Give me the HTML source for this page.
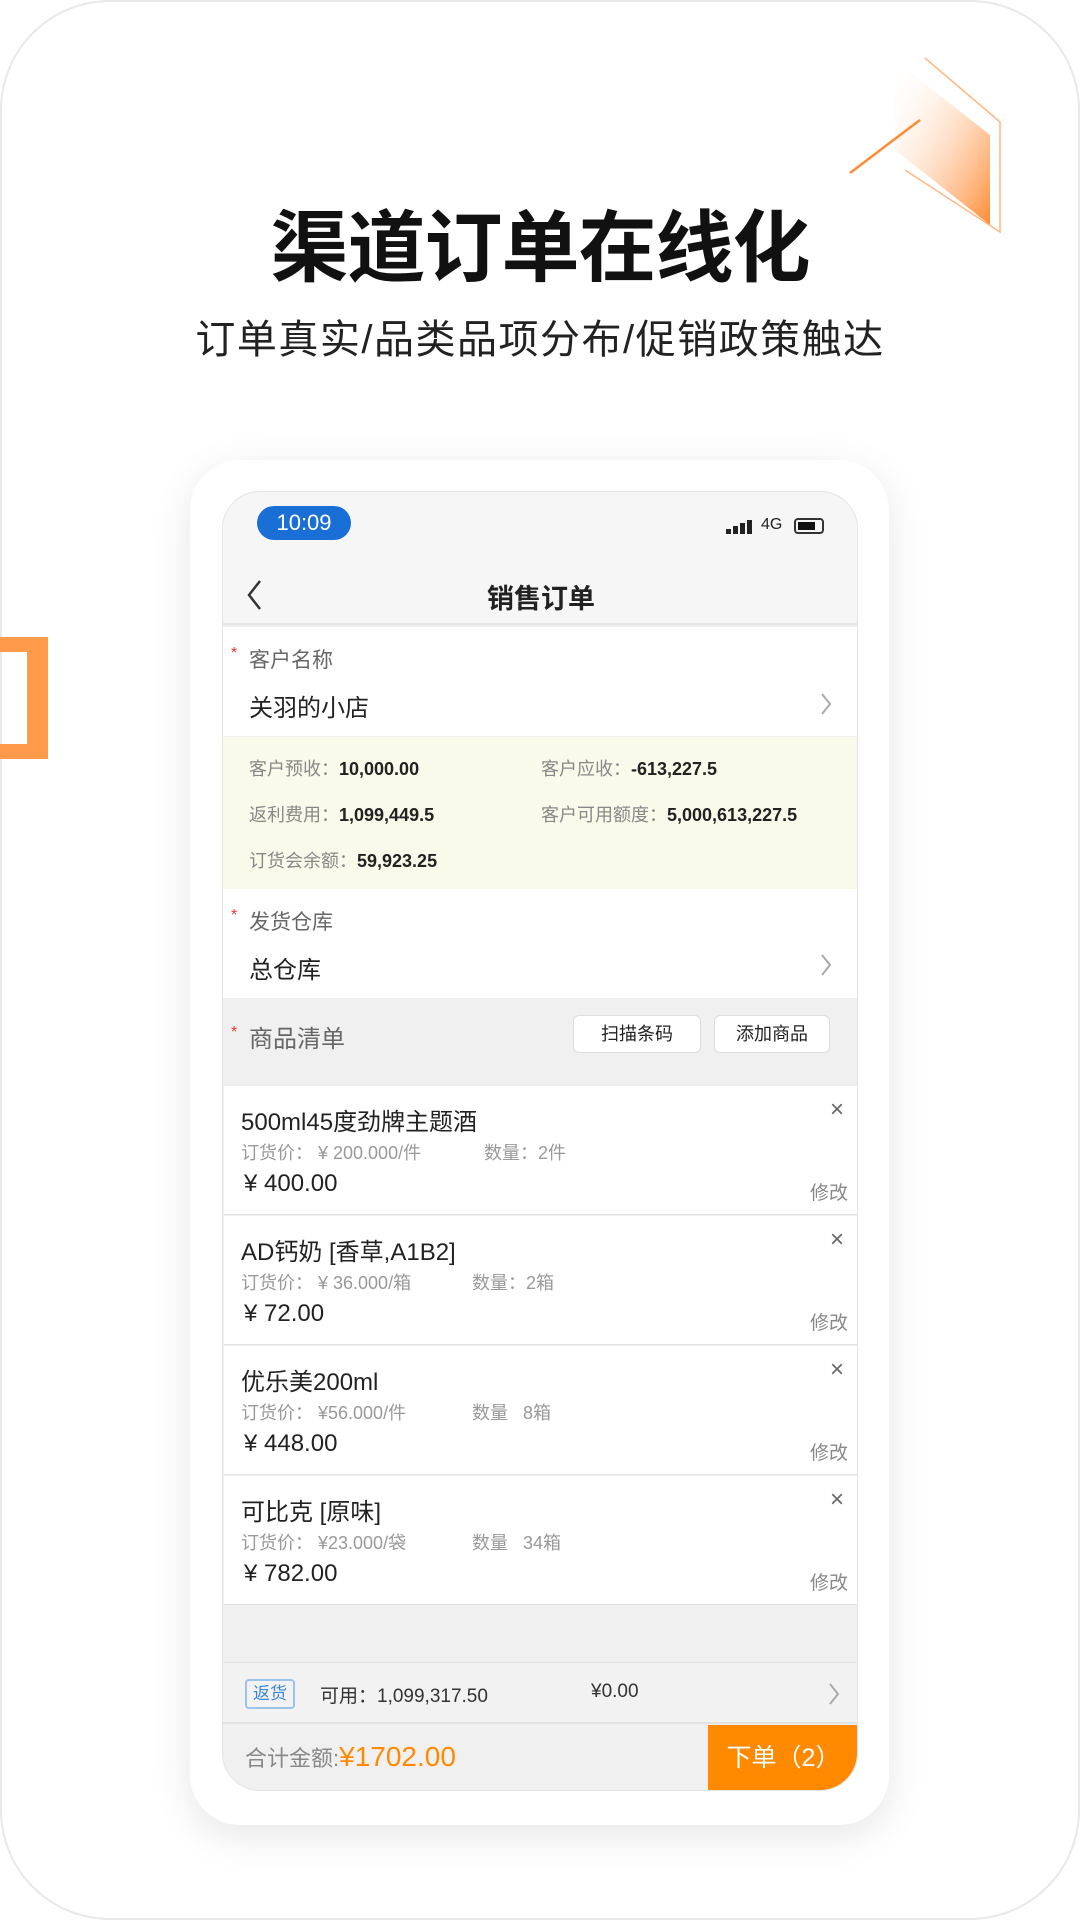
<!DOCTYPE html>
<html><head><meta charset="utf-8"><style>
*{margin:0;padding:0;box-sizing:border-box}
body{width:1080px;height:1920px;background:#fff;position:relative;overflow:hidden;font-family:"Liberation Sans","Noto Sans CJK SC",sans-serif;color:#222}
.a{position:absolute;white-space:nowrap}
.frame{position:absolute;left:0;top:0;width:1080px;height:1920px;border:2px solid #e8e8e8;border-radius:110px}
.card{position:absolute;left:190px;top:460px;width:699px;height:1365px;background:#fff;border-radius:50px;box-shadow:0 10px 40px rgba(0,0,0,0.10)}
.screen{position:absolute;left:222px;top:491px;width:636px;height:1300px;background:#f0f0f0;border-radius:38px;overflow:hidden;border:1px solid #e4e4e4}
.s{position:absolute;left:0;width:636px}
.lbl{color:#666;font-size:21px}
.star{color:#e33;font-size:16px}
.item{position:absolute;left:1px;width:634px;height:129px;background:#fff;border-bottom:1px solid #e2e2e2}
.item .n{position:absolute;left:17px;top:16px;font-size:24px;color:#222}
.item .p{position:absolute;left:17px;top:53px;font-size:18px;color:#999}
.item .q{position:absolute;left:264px;top:53px;font-size:18px;color:#999}
.item .t{position:absolute;left:20px;top:84px;font-size:24px;color:#222}
.item .x{position:absolute;right:14px;top:10px;font-size:24px;color:#666}
.item .m{position:absolute;right:10px;top:92px;font-size:19px;color:#888}
.y{font-size:18px;color:#888}.y b{color:#222;font-weight:bold}
.btn{position:absolute;top:17px;height:38px;background:#fff;border:1px solid #ddd;border-radius:6px;font-size:18px;text-align:center;line-height:36px;color:#222}
</style></head><body>
<div class="frame"></div>
<svg class="a" style="left:845px;top:50px" width="170" height="190" viewBox="0 0 170 190">
<defs><linearGradient id="g" x1="0" y1="0" x2="1" y2="1"><stop offset="0" stop-color="#fff" stop-opacity="0"/><stop offset="1" stop-color="#ff8a33"/></linearGradient></defs>
<polygon points="50,10 145,85 145,175 50,100" fill="url(#g)"/>
<polyline points="80,8 155,72 155,182 60,120" fill="none" stroke="#ff9a50" stroke-width="1.5" opacity="0.7"/>
<line x1="5" y1="123" x2="75" y2="70" stroke="#ff8a33" stroke-width="2.5"/>
</svg>
<div class="a" style="left:0;top:637px;width:48px;height:122px;border:15px solid #ff9a4a;border-left:none;border-right-width:21px"></div>
<div class="a" style="left:0;top:186px;width:1080px;text-align:center;font-size:78px;font-weight:bold;color:#111;letter-spacing:-1px">渠道订单在线化</div>
<div class="a" style="left:0;top:307px;width:1080px;text-align:center;font-size:40px;color:#222;letter-spacing:1.5px">订单真实/品类品项分布/促销政策触达</div>
<div class="card"></div>
<div class="screen">
 <div class="s" style="top:0;height:133px;background:#f6f6f6;border-bottom:2px solid #e6e6e6"></div>
 <div class="a" style="left:34px;top:14px;width:94px;height:34px;background:#1a6fd6;border-radius:17px;color:#fff;font-size:22px;text-align:center;line-height:34px;font-weight:500">10:09</div>
 <div class="a" style="left:503px;top:28px;width:28px;height:14px">
  <div class="a" style="left:0;top:9px;width:5px;height:5px;background:#222"></div><div class="a" style="left:7px;top:6px;width:5px;height:8px;background:#222"></div><div class="a" style="left:14px;top:3px;width:5px;height:11px;background:#222"></div><div class="a" style="left:21px;top:0;width:5px;height:14px;background:#222"></div></div>
 <div class="a" style="left:538px;top:24px;font-size:16px;color:#222">4G</div>
 <div class="a" style="left:571px;top:26px;width:30px;height:16px;border:2px solid #333;border-radius:4px"><div style="margin:2px;width:17px;height:8px;background:#111"></div></div>
 <svg class="a" style="left:22px;top:86px" width="20" height="34"><polyline points="15,3 4,17 15,31" fill="none" stroke="#333" stroke-width="2.5"/></svg>
 <div class="a" style="left:0;width:636px;text-align:center;top:85px;font-size:27px;font-weight:bold;color:#222">销售订单</div>
 <div class="s" style="top:135px;height:109px;background:#fff"></div>
 <div class="a" style="left:8px;top:153px"><span class="star">*</span></div>
 <div class="a lbl" style="left:26px;top:152px">客户名称</div>
 <div class="a" style="left:26px;top:196px;font-size:24px">关羽的小店</div>
 <svg class="a" style="left:596px;top:199px" width="14" height="26"><polyline points="3,3 11,13 3,23" fill="none" stroke="#aaa" stroke-width="2"/></svg>
 <div class="s" style="top:244px;height:153px;background:#fafaeb;border-top:1px solid #eee"></div>
 <div class="a y" style="left:26px;top:263px">客户预收：<b>10,000.00</b></div>
 <div class="a y" style="left:318px;top:263px">客户应收：<b>-613,227.5</b></div>
 <div class="a y" style="left:26px;top:309px">返利费用：<b>1,099,449.5</b></div>
 <div class="a y" style="left:318px;top:309px">客户可用额度：<b>5,000,613,227.5</b></div>
 <div class="a y" style="left:26px;top:355px">订货会余额：<b>59,923.25</b></div>
 <div class="s" style="top:397px;height:109px;background:#fff"></div>
 <div class="a" style="left:8px;top:415px"><span class="star">*</span></div>
 <div class="a lbl" style="left:26px;top:414px">发货仓库</div>
 <div class="a" style="left:26px;top:458px;font-size:24px">总仓库</div>
 <svg class="a" style="left:596px;top:460px" width="14" height="26"><polyline points="3,3 11,13 3,23" fill="none" stroke="#aaa" stroke-width="2"/></svg>
 <div class="a" style="left:8px;top:532px"><span class="star">*</span></div>
 <div class="a" style="left:26px;top:527px;font-size:24px;color:#666">商品清单</div>
 <div class="btn" style="left:350px;top:523px;width:128px">扫描条码</div>
 <div class="btn" style="left:491px;top:523px;width:116px">添加商品</div>
 <div class="item" style="top:594px"><div class="n">500ml45度劲牌主题酒</div><div class="p">订货价： ¥ 200.000/件</div><div class="q" style="left:260px">数量：2件</div><div class="t">¥ 400.00</div><div class="x">×</div><div class="m">修改</div></div>
 <div class="item" style="top:724px"><div class="n">AD钙奶 [香草,A1B2]</div><div class="p">订货价： ¥ 36.000/箱</div><div class="q" style="left:248px">数量：2箱</div><div class="t">¥ 72.00</div><div class="x">×</div><div class="m">修改</div></div>
 <div class="item" style="top:854px"><div class="n">优乐美200ml</div><div class="p">订货价： ¥56.000/件</div><div class="q" style="left:248px">数量 &nbsp; 8箱</div><div class="t">¥ 448.00</div><div class="x">×</div><div class="m">修改</div></div>
 <div class="item" style="top:984px"><div class="n">可比克 [原味]</div><div class="p">订货价： ¥23.000/袋</div><div class="q" style="left:248px">数量 &nbsp; 34箱</div><div class="t">¥ 782.00</div><div class="x">×</div><div class="m">修改</div></div>
 <div class="s" style="top:1170px;height:62px;border-top:1px solid #e2e2e2;border-bottom:2px solid #e2e2e2;background:#f2f2f2"></div>
 <div class="a" style="left:22px;top:1187px;width:50px;height:30px;border:2px solid #9cc3ea;border-radius:4px;color:#3a86d6;font-size:17px;text-align:center;line-height:26px">返货</div>
 <div class="a" style="left:97px;top:1189px;font-size:19px;color:#333">可用：1,099,317.50</div>
 <div class="a" style="left:368px;top:1189px;font-size:19px;color:#333">¥0.00</div>
 <svg class="a" style="left:604px;top:1189px" width="14" height="26"><polyline points="3,3 11,13 3,23" fill="none" stroke="#aaa" stroke-width="2"/></svg>
 <div class="a" style="left:22px;top:1249px;font-size:22px;color:#888">合计金额:<span style="color:#ff8a00;font-size:28px">¥1702.00</span></div>
 <div class="a" style="left:485px;top:1233px;width:151px;height:67px;background:#ff8a00;color:#fff;font-size:25px;text-align:center;line-height:67px">下单（2）</div>
</div>
</body></html>
